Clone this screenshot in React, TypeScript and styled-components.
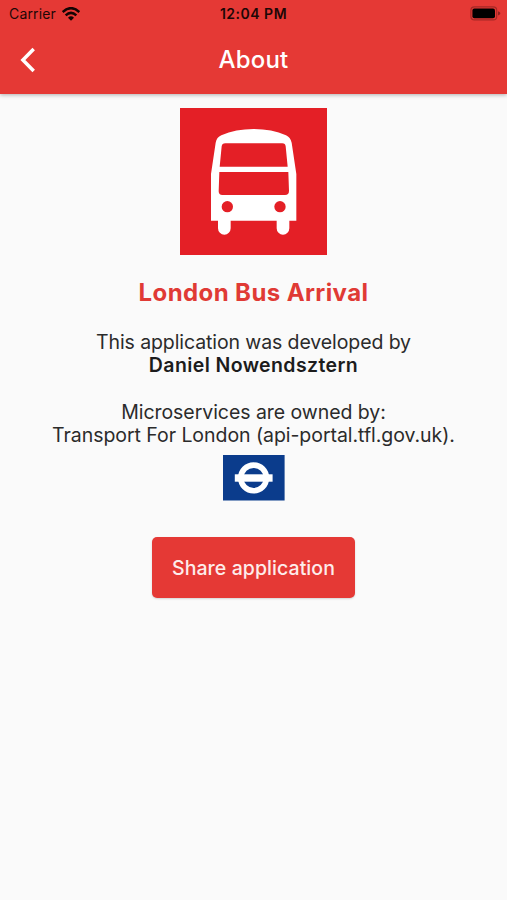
import React from 'react';
import styled, { createGlobalStyle } from 'styled-components';

const GlobalStyle = createGlobalStyle`
  * { box-sizing: border-box; }
  body { margin: 0; background: #fafafa; font-family: Inter, sans-serif; }
`;

const Screen = styled.div`
  display: flex;
  flex-direction: column;
  min-height: 900px;
  background: #fafafa;
`;

const Header = styled.header`
  height: 93.5px;
  background: #e53935;
  box-shadow: 0 1px 4px rgba(0, 0, 0, 0.3);
`;

const StatusBar = styled.div`
  display: grid;
  grid-template-columns: 1fr auto 1fr;
  align-items: center;
  height: 27px;
  padding: 0 6px 0 9px;
  color: #1d0706;
`;

const Carrier = styled.div`
  display: flex;
  align-items: center;
  gap: 6px;
  font-size: 14px;
  letter-spacing: 0.15px;
`;

const Clock = styled.div`
  margin-right: 3px;
  font-size: 14px;
  font-weight: 600;
  letter-spacing: 0.5px;
`;

const Battery = styled.svg`
  justify-self: end;
`;

const NavBar = styled.nav`
  display: grid;
  grid-template-columns: 56px 1fr 56px;
  align-items: center;
  height: 65px;
`;

const BackButton = styled.button`
  display: flex;
  width: 56px;
  padding: 0 0 0 18px;
  border: 0;
  background: none;
`;

const PageTitle = styled.h1`
  margin: 0;
  color: #fff;
  font-size: 24px;
  font-weight: 500;
  letter-spacing: 0.2px;
  text-align: center;
`;

const Content = styled.main`
  display: flex;
  flex-direction: column;
  align-items: center;
  padding-top: 14.5px;
`;

const BusLogo = styled.svg`
  display: block;
  width: 147px;
  height: 147px;
`;

const AppName = styled.h2`
  margin: 23px 0 0;
  color: #e03a35;
  font-size: 24px;
  line-height: 30px;
  font-weight: 650;
  letter-spacing: 0.4px;
`;

const Paragraph = styled.p<{ $top: number; $spacing: number }>`
  margin: ${(p) => p.$top}px 0 0;
  color: #2b2b2b;
  font-size: 19.5px;
  line-height: 23.4px;
  letter-spacing: ${(p) => p.$spacing}px;
  text-align: center;
  white-space: nowrap;
`;

const Author = styled.strong`
  color: #1c1c1c;
  font-weight: 600;
  letter-spacing: 0.4px;
`;

const Roundel = styled.svg`
  display: block;
  width: 62px;
  height: 46px;
  margin-top: 7px;
`;

const ShareButton = styled.button`
  width: 203px;
  height: 61px;
  margin-top: 36.4px;
  padding: 0;
  border: 0;
  border-radius: 5px;
  background: #e53935;
  box-shadow: 0 1px 2px rgba(0, 0, 0, 0.15);
  color: #fdeceb;
  font-family: inherit;
  font-size: 19.5px;
  font-weight: 500;
  letter-spacing: 0.07px;
`;

export default function App() {
  return (
    <Screen>
      <GlobalStyle />
      <Header>
        <StatusBar>
          <Carrier>
            Carrier
            <svg width="18" height="14" viewBox="0 0 54 42" fill="none" stroke="#140403">
              <path d="M2 15 Q27 -8 52 15" strokeWidth="7.5" />
              <path d="M11 25 Q27 10 43 25" strokeWidth="7.5" />
              <path d="M27 41 L18 32 Q27 24 36 32 Z" fill="#140403" stroke="none" />
            </svg>
          </Carrier>
          <Clock>12:04 PM</Clock>
          <Battery width="31" height="15" viewBox="0 0 31 15">
            <rect x="0.9" y="0.9" width="25.8" height="13" rx="3.5" fill="none" stroke="#a52926" strokeWidth="1.2" />
            <rect x="2.4" y="2.6" width="22.6" height="9.6" rx="2" fill="#000" />
            <path d="M28 5.2 Q30.4 6 30.4 7.3 Q30.4 8.6 28 9.4Z" fill="#8f2321" />
          </Battery>
        </StatusBar>
        <NavBar>
          <BackButton aria-label="Back">
            <svg width="20" height="26" viewBox="0 0 20 26" fill="none" stroke="#fff" strokeWidth="3.5">
              <path d="M15.7 2 L4.9 13 L15.7 24" />
            </svg>
          </BackButton>
          <PageTitle>About</PageTitle>
        </NavBar>
      </Header>
      <Content>
        <BusLogo viewBox="31 24 441 441">
          <rect x="31" y="24" width="441" height="441" fill="#e41f26" />
          <path
            fill="#fff"
            d="M124 362 V222 L138 128 Q141 112 155 106 Q198 87 252 87 Q306 87 349 106 Q362 112 366 128 L380 222 V362 H359 V385 A19 19 0 0 1 321 385 V362 H183 V385 A19 19 0 0 1 145 385 V362 Z"
          />
          <path
            fill="#e41f26"
            d="M167 130 H338 Q347 130 348 139 L354 200 H150 L156 139 Q157 130 167 130 Z M149 216 H356 L358 272 Q358 285 346 285 H158 Q147 285 147 274 Z"
          />
          <circle cx="173" cy="320" r="17" fill="#e41f26" />
          <circle cx="331" cy="320" r="17" fill="#e41f26" />
        </BusLogo>
        <AppName>London Bus Arrival</AppName>
        <Paragraph $top={23} $spacing={-0.1}>
          This application was developed by
          <br />
          <Author>Daniel Nowendsztern</Author>
        </Paragraph>
        <Paragraph $top={23} $spacing={-0.05}>
          Microservices are owned by:
          <br />
          Transport For London (api-portal.tfl.gov.uk).
        </Paragraph>
        <Roundel viewBox="0 0 62 46">
          <rect y="-0.5" width="61.6" height="46" fill="#0b3c8c" />
          <circle cx="30.6" cy="22.9" r="12.8" fill="none" stroke="#fff" strokeWidth="5.6" />
          <rect x="11.8" y="19.3" width="37.8" height="7.4" fill="#fff" />
        </Roundel>
        <ShareButton>Share application</ShareButton>
      </Content>
    </Screen>
  );
}
